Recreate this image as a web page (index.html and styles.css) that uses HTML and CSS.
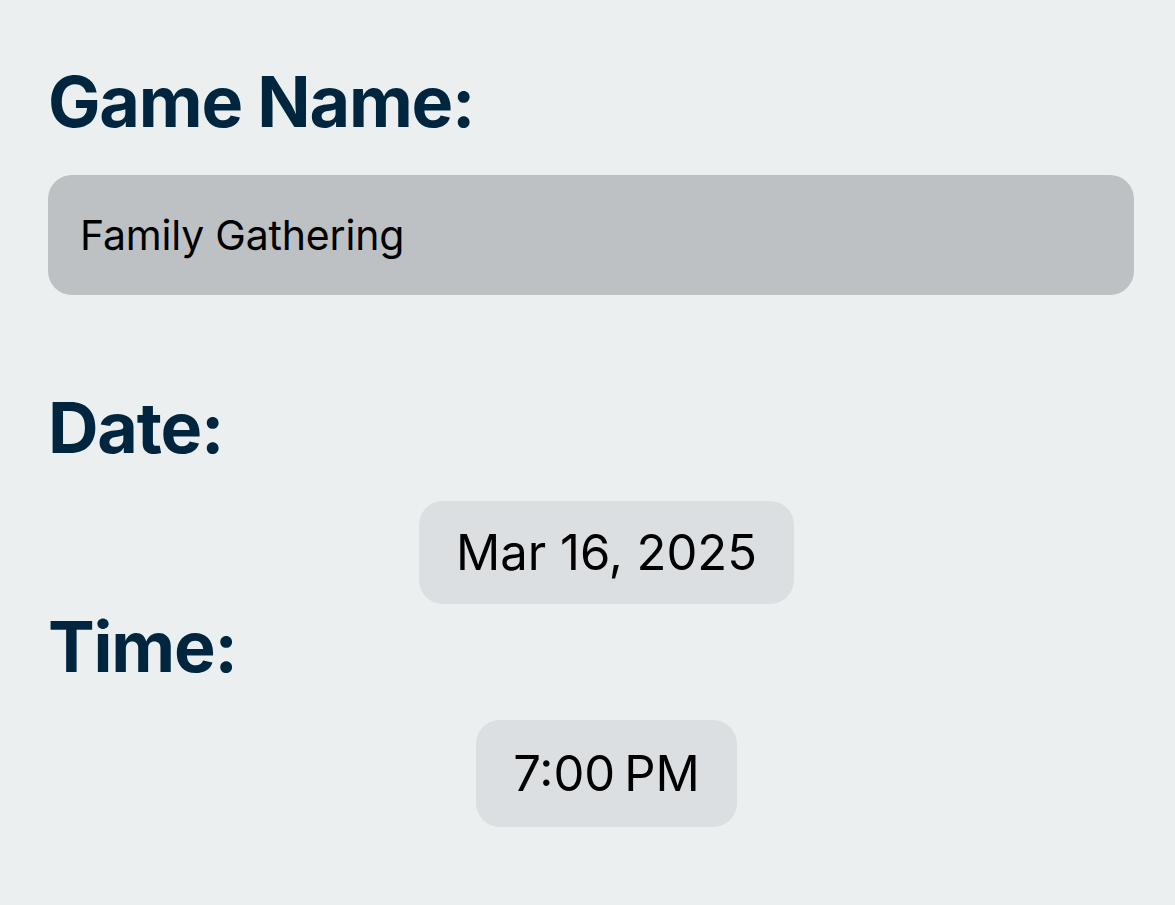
FILE: index.html
```html
<!DOCTYPE html>
<html lang="en">
<head>
<meta charset="utf-8">
<title>Game</title>
<link rel="stylesheet" href="styles.css">
</head>
<body>
<main class="form">
  <h2 class="label label-first">Game Name:</h2>
  <div class="text-field">Family Gathering</div>
  <h2 class="label label-date">Date:</h2>
  <div class="picker-row"><div class="pill pill-date">Mar 16, 2025</div></div>
  <h2 class="label label-time">Time:</h2>
  <div class="picker-row"><div class="pill pill-time">7:00&#8239;PM</div></div>
</main>
</body>
</html>
```
FILE: styles.css
```css
html, body {
  margin: 0;
  padding: 0;
  background: #ebeff0;
}
body {
  font-family: Inter, "Noto Sans", sans-serif;
  width: 1175px;
  height: 905px;
  overflow: hidden;
}
.form {
  display: flex;
  flex-direction: column;
  padding: 0 41px 0 48px;
}
.label {
  margin: 0;
  font-size: 70px;
  line-height: 84px;
  font-weight: 700;
  color: #00263f;
  letter-spacing: -1.2px;
}
.label-first { margin-top: 60px; }
.label-date { margin-top: 91px; }
.label-time { margin-top: 1px; }
.text-field {
  margin-top: 31px;
  height: 120px;
  border-radius: 24px;
  background: #bdc1c3;
  display: flex;
  align-items: center;
  padding-left: 32px;
  font-size: 41px;
  letter-spacing: -0.2px;
  color: #000;
}
.picker-row {
  display: flex;
  justify-content: center;
  margin-top: 31px;
  padding-left: 31px;
}
.pill {
  display: flex;
  align-items: center;
  padding: 0 37px;
  border-radius: 24px;
  background: #dcdfe2;
  font-size: 49px;
  color: #000;
}
.pill-date { height: 103px; }
.pill-time { height: 107px; }
```
